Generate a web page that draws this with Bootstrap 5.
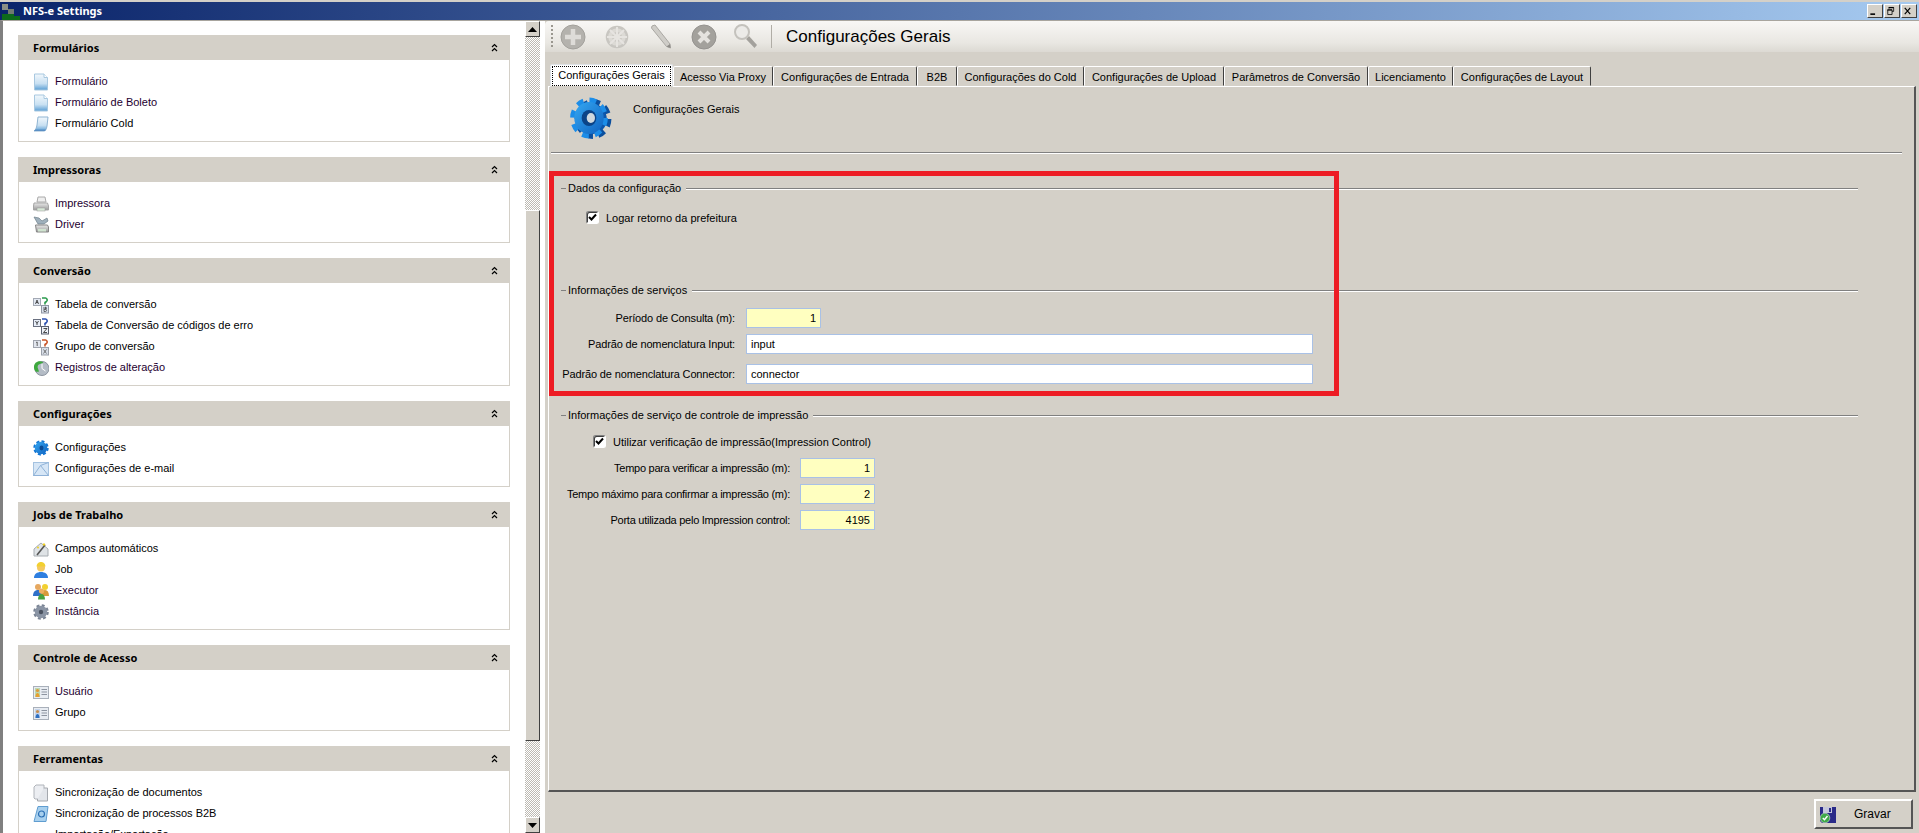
<!DOCTYPE html>
<html lang="pt">
<head>
<meta charset="utf-8">
<title>NFS-e Settings</title>
<link href="https://cdn.jsdelivr.net/npm/bootstrap@5.3.0/dist/css/bootstrap.min.css" rel="stylesheet">
<style>
html,body{height:833px;overflow:hidden}
body{background:#d4d0c8;font:11px/14px "Liberation Sans",Arial,sans-serif;color:#000;padding-top:2px}
.win-title{height:18px;background:linear-gradient(90deg,#0a246a,#a6caf0);color:#fff;font:700 11px/18px "Noto Sans",sans-serif;padding-left:2px}
.win-title svg{margin-right:3px}
.win-btns{gap:1px;margin-right:2px}
.win-btn{width:16px;height:14px;background:#d4d0c8;border:1px solid;border-color:#fff #404040 #404040 #fff;display:flex}
.win-body{height:813px;border-top:1px solid #a8a59e;border-left:3px solid #808080}
.side{width:522px;background:#fff;overflow:hidden;padding:14px 15px 0;flex:none}
.grp-panel{width:492px;margin-bottom:15px}
.grp-head{height:25px;background:#d4d0c8;font:700 11px/25px "Noto Sans",sans-serif;padding:0 12px 0 15px}
.grp-list{border:1px solid #d4d0c8;border-top:0;padding:11px 0 7px 14px}
.grp-item{height:21px;line-height:21px;gap:6px;color:#000;text-decoration:none}
.grp-item.seen{color:#240030}
.sbar{width:15px;flex:none;background:repeating-conic-gradient(#bdbab3 0 25%,#fff 0 50%) 0 0/2px 2px}
.sbtn{height:16px;background:#d4d0c8;border:1px solid;border-color:#fff #404040 #404040 #fff;display:flex;align-items:center;justify-content:center;flex:none}
.sthumb{height:531px;background:#d4d0c8;border:1px solid;border-color:#fff #404040 #404040 #fff;margin-top:173px;margin-bottom:76px;flex:none}
.split{width:5px;flex:none;background:#fff}
.main-col{flex:1;min-width:0;background:#d4d0c8}
.tbar{height:31px;background:linear-gradient(180deg,#f8f7f5 0,#e9e7e2 70%,#dcd9d3 100%);border-top-left-radius:4px;padding-left:6px;flex:none}
.tgrip{width:2px;height:24px;background:repeating-linear-gradient(180deg,#9a978f 0 2px,transparent 2px 4px);margin-right:5px;margin-top:1px}
.tslot{width:30px;height:30px;display:block;margin-right:14px}
.tslot.nudge1{margin-right:13px}
.tslot.nudge2{margin-right:13px}
.tslot.nudge3{margin-right:9px}
.tsep{width:1px;height:23px;background:#b0ada6;margin-right:14px}
.ttitle{font-size:17px;line-height:20px}
.tab-strip{margin:12px 0 0 5px;height:22px;border:0;flex:none;flex-wrap:nowrap;position:relative;z-index:1}
.tab-strip .nav-link{font-size:11px;line-height:14px;color:#000;background:#d4d0c8;border:1px solid;border-color:#fff #404040 transparent #fff;border-radius:2px 2px 0 0;padding:3px 0 2px;margin:2px 0 0;height:20px;white-space:nowrap;text-align:center}
.tab-strip .nav-link.active{height:23px;margin-top:0;padding:1px 1px 0;border-bottom-color:#d4d0c8}
.tab-strip .nav-item:nth-child(1) .nav-link{width:123px}
.tab-strip .nav-item:nth-child(2) .nav-link{width:100px}
.tab-strip .nav-item:nth-child(3) .nav-link{width:144px}
.tab-strip .nav-item:nth-child(4) .nav-link{width:40px}
.tab-strip .nav-item:nth-child(5) .nav-link{width:127px}
.tab-strip .nav-item:nth-child(6) .nav-link{width:140px}
.tab-strip .nav-item:nth-child(7) .nav-link{width:144px}
.tab-strip .nav-item:nth-child(8) .nav-link{width:85px}
.tab-strip .nav-item:nth-child(9) .nav-link{width:138px}
.tab-focus{display:block;border:1px dotted #000;padding:1px 0 3px}
.tab-page{flex:1;min-height:0;margin:0 3px 0 3px;border:1px solid;border-color:#fff #555 #555 #fff;border-width:1px 2px 2px 1px}
.page-head{height:65px;padding:15px 0 0 84px}
.gear-big{left:20px;top:8px}
.page-rule{height:2px;background:#808080;border-bottom:1px solid #fff;margin:0 12px 0 2px}
.fset{width:1297px;margin-left:12px}
.legend-row{height:14px}
.legend-row::before{content:"";width:5px;height:1px;background:#808080;margin-right:2px}
.legend-row::after{content:"";flex:1;height:2px;background:#808080;border-bottom:1px solid #fff;margin:2px 0 0 5px}
.fs1{margin-top:27px}
.fs2{margin-top:59px}
.fs3{margin-top:24px}
.chk-row{height:13px;gap:7px;margin-top:16px;margin-left:25px}
.fs3 .chk-row{margin-top:13px;margin-left:32px}
.chk-box{width:13px;height:13px;margin:0;flex:none;border-radius:0;border:1px solid;border-color:#808080 #fff #fff #808080;box-shadow:inset 1px 1px 0 #404040;background-color:#fff;opacity:1}
.chk-box:checked{background-color:#fff;border-color:#808080 #fff #fff #808080;background-image:url("data:image/svg+xml,%3Csvg xmlns='http://www.w3.org/2000/svg' viewBox='0 0 13 13'%3E%3Cpath d='M3 6l2.500 2.500L10 3.500' fill='none' stroke='%23000' stroke-width='2'/%3E%3C/svg%3E");background-size:13px 13px}
.frm-row{height:20px;margin-top:6px}
.frm-label{text-align:right;flex:none;white-space:nowrap}
.fs2 .frm-label{width:174px;margin-right:11px;letter-spacing:-.14px}
.fs3 .frm-label{width:229px;margin-right:10px;letter-spacing:-.25px}
.frm-first{margin-top:11px}
.frm-after{margin-top:10px}
.fs3 .chk-row + .frm-row{margin-top:10px}
.frm-input{height:20px;min-height:0;padding:0 4px;font-size:11px;line-height:18px;color:#000;border:1px solid #a9c1e6;border-radius:0;background:#fff;box-shadow:none}
.frm-num{width:75px;background:#ffffc0;text-align:right;flex:none}
.frm-wide{width:567px;flex:none}
.mark-box{left:0;top:84px;width:790px;height:225px;border:5px solid #ed1c24;pointer-events:none}
.foot-bar{height:41px;flex:none;padding:7px 6px 0 0}
.save-btn{width:99px;height:30px;border:2px solid;border-color:#fff #555 #555 #fff;border-radius:0;background:#d4d0c8;padding:0 0 0 4px;font-size:12px;line-height:14px;color:#000;gap:18px}
.save-btn:hover{background:#d4d0c8;color:#000;border-color:#fff #555 #555 #fff}
</style>
</head>
<body>
<svg width="0" height="0" class="position-absolute" aria-hidden="true">
<defs>
<linearGradient id="gd" x1="0" y1="0" x2="0" y2="1"><stop offset="0" stop-color="#f2f8fc"/><stop offset=".6" stop-color="#c8e0f2"/><stop offset="1" stop-color="#5a9ed4"/></linearGradient>
<linearGradient id="gg" x1="0" y1="0" x2="0" y2="1"><stop offset="0" stop-color="#e8e8e8"/><stop offset="1" stop-color="#9a9a9a"/></linearGradient>
<linearGradient id="gb" x1="0" y1="0" x2="1" y2="1"><stop offset="0" stop-color="#35a8f2"/><stop offset="1" stop-color="#0f62c0"/></linearGradient>
<symbol id="i-doc" viewBox="0 0 16 18"><path d="M1.500 1H11l3.500 3.500V17h-13z" fill="url(#gd)" stroke="#a8c8e0"/><path d="M11 1v3.500h3.500" fill="#fff" stroke="#a8c8e0"/></symbol>
<symbol id="i-cold" viewBox="0 0 16 18"><path d="M5 2h10l-1 9c-.5 3-1.500 5-3 5H1c1.500-1 2.500-3 3-6z" fill="url(#gd)" stroke="#8fb4d2"/><path d="M1 16h10c.8 0 1.500-.5 2-1.500H2.400z" fill="#5a8fc4"/></symbol>
<symbol id="i-print" viewBox="0 0 16 18"><path d="M5 2h7l1 5H4z" fill="#eee" stroke="#aaa"/><path d="M1 8h13.500l1 3v4H.5v-4z" fill="url(#gg)" stroke="#a5a5a5"/><rect x="4" y="13" width="8" height="3" fill="#d8e8d8" stroke="#999" stroke-width=".5"/></symbol>
<symbol id="i-drv" viewBox="0 0 16 18"><path d="M1 1l5 1 3 3 5-3 1 3-4 3H5z" fill="#9fb0bc" stroke="#6f7f8a" stroke-width=".7"/><path d="M2.500 9h12l1 2v5h-12z" fill="url(#gg)" stroke="#858585"/><rect x="5" y="13" width="8" height="2.500" fill="#cfe3cf"/></symbol>
<symbol id="i-ab" viewBox="0 0 16 18"><rect x=".5" y="2.500" width="7" height="7" fill="#e2e8f2" stroke="#a3a9b4"/><rect x="8.500" y="9.500" width="7" height="7.500" fill="#dbe2ee" stroke="#8f96a3"/><path d="M9 2h3.500a2 2 0 0 1 1 3.500l-1.500 1v2" fill="none" stroke="#2a9a4c" stroke-width="1.600"/><path d="M2.500 8l1.500-4 1.500 4M3 6.500h2" stroke="#333" stroke-width=".8" fill="none"/><path d="M11 11v4.500h1.500c1.500 0 1.500-2.200 0-2.200H11m1.500 0c1.200 0 1.200-2.300 0-2.300z" stroke="#333" stroke-width=".7" fill="none"/></symbol>
<symbol id="i-yz" viewBox="0 0 16 18"><rect x=".5" y="2.500" width="7" height="7" fill="#e8eef8" stroke="#6a7080"/><rect x="8.500" y="9.500" width="7" height="7.500" fill="#eef2f8" stroke="#5a6070"/><path d="M9 2h3.500a2 2 0 0 1 1 3.500l-1.500 1v2" fill="none" stroke="#2a4fb0" stroke-width="1.600"/><path d="M2.500 4l1.500 2.500L5.500 4M4 6.500V8" stroke="#222" stroke-width=".8" fill="none"/><path d="M10.500 11.500h3.500l-3.500 4h3.500" stroke="#222" stroke-width=".8" fill="none"/></symbol>
<symbol id="i-1x" viewBox="0 0 16 18"><rect x=".5" y="2.500" width="7" height="7" fill="#e2e6ee" stroke="#a0a4ae"/><rect x="8.500" y="9.500" width="7" height="7.500" fill="#d8dee8" stroke="#9aa0aa"/><path d="M9 2h3.500a2 2 0 0 1 1 3.500l-1.500 1v2" fill="none" stroke="#c8552a" stroke-width="1.600"/><path d="M3 4.500L4.200 4v4" stroke="#444" stroke-width=".8" fill="none"/><path d="M10.500 11.500l3 4m0-4l-3 4" stroke="#555" stroke-width=".8"/></symbol>
<symbol id="i-log" viewBox="0 0 16 18"><circle cx="9" cy="9.500" r="7" fill="#b4bcc6" stroke="#8c94a0"/><path d="M9 5v4.500l3.500 2.500" stroke="#fff" fill="none"/><path d="M1.500 11C-.5 5.500 3.500 1.500 8 2.500c1.500 .3 2.500 1 2.500 1L7 5C5 5.500 4 7.500 5 9.500l1 3C4 13 2.500 13 1.500 11z" fill="#3ea83e"/></symbol>
<symbol id="i-cfg" viewBox="0 0 16 18"><circle cx="8" cy="9" r="6.300" fill="none" stroke="#1476d4" stroke-width="2.800" stroke-dasharray="2.800 2.100"/><circle cx="8" cy="9" r="6.200" fill="url(#gb)"/><ellipse cx="8.500" cy="9" rx="2" ry="2.400" fill="#0a4a96"/></symbol>
<symbol id="i-mail" viewBox="0 0 16 18"><rect x=".5" y="2.500" width="15" height="13" fill="#d6e6f6" stroke="#a4c2e0"/><path d="M.5 15.500l7-10 8-3M.5 15.500l15 0M7.500 5.500l8 10" fill="none" stroke="#8fb2d8"/></symbol>
<symbol id="i-auto" viewBox="0 0 16 18"><path d="M1 9l7-6 7 6v7H1z" fill="#dfe3e6" stroke="#a7adb2"/><path d="M4 15L12 5" stroke="#555" stroke-width="1.600"/><path d="M11 3l1.500 1.500L11 6 9.500 4.500z" fill="#f0d020"/><circle cx="5" cy="7.500" r="1" fill="#f0d020"/></symbol>
<symbol id="i-user" viewBox="0 0 16 18"><path d="M1 17c0-4 3-6 7-6s7 2 7 6z" fill="#2f7fe0"/><circle cx="8" cy="6.500" r="4" fill="#f4c860"/><path d="M3.500 5.500C4 2 6 1 8 1s4 1 4.500 4.500z" fill="#f2d030"/></symbol>
<symbol id="i-users" viewBox="0 0 16 18"><circle cx="5" cy="5" r="3" fill="#e6a860"/><path d="M0 14c0-4 2-6 5-6s4 2 4 6z" fill="#2f70c8"/><circle cx="12" cy="5" r="3" fill="#f2d030"/><path d="M8 14c0-4 1.500-6 4-6s4 2 4 6z" fill="#d89a3c"/><circle cx="8.500" cy="9" r="2.600" fill="#eeb060"/><path d="M5 17.500c0-3.500 1.500-5.500 3.500-5.500s3.500 2 3.500 5.500z" fill="#48a040"/></symbol>
<symbol id="i-inst" viewBox="0 0 16 18"><circle cx="8" cy="9" r="6.500" fill="none" stroke="#7a8494" stroke-width="2.600" stroke-dasharray="2.800 2.300"/><circle cx="8" cy="9" r="6.200" fill="#8a94a4"/><circle cx="8" cy="9" r="2.200" fill="#4a5260"/></symbol>
<symbol id="i-ucard" viewBox="0 0 16 18"><rect x=".5" y="3.500" width="15" height="12" fill="#e8ecf2" stroke="#a9b0ba"/><rect x="2" y="5" width="5" height="9" fill="#bcd8b0"/><circle cx="4.500" cy="7.500" r="1.600" fill="#e09a3c"/><path d="M2.500 14c0-3 1-4 2-4s2 1 2 4z" fill="#e6a030"/><path d="M8.500 6.500h5.500M8.500 9h5.500M8.500 11.500h5.500" stroke="#8d94a0"/></symbol>
<symbol id="i-gcard" viewBox="0 0 16 18"><rect x=".5" y="3.500" width="15" height="12" fill="#e8ecf2" stroke="#a9b0ba"/><rect x="2" y="5" width="5" height="9" fill="#c4d4ec"/><circle cx="4.500" cy="7.500" r="1.600" fill="#c89050"/><path d="M2.500 14c0-3 1-4 2-4s2 1 2 4z" fill="#3070c0"/><path d="M8.500 6.500h5.500M8.500 9h5.500M8.500 11.500h5.500" stroke="#8d94a0"/></symbol>
<symbol id="i-sync" viewBox="0 0 16 18"><path d="M1 3l2-2h8v14H2l-1-1z" fill="#eceef2" stroke="#b0b4ba"/><path d="M11 4h3.500v13H4.500v-2" fill="#e2e5ea" stroke="#a4a8ae"/></symbol>
<symbol id="i-b2b" viewBox="0 0 16 18"><path d="M5 1.500h10l-2 15H1z" fill="#a8d0ee" stroke="#5f9dd0"/><circle cx="8.500" cy="9" r="3" fill="none" stroke="#2b6fb4" stroke-width="1.200"/></symbol>
<symbol id="i-imp" viewBox="0 0 16 18"><path d="M2 16a6 6 0 1 1 12 0" fill="none" stroke="#3d9a44" stroke-width="2.600"/></symbol>
<symbol id="i-chev" viewBox="0 0 7 9"><path d="M1 4l2.500-2.500L6 4M1 8l2.500-2.500L6 8" fill="none" stroke="#000" stroke-width="1.200"/></symbol>
</defs>
</svg>

<div class="win-title d-flex align-items-center">
  <svg width="18" height="18" viewBox="0 0 18 18"><rect x="0" y="2" width="6" height="6" fill="#8a8f86"/><rect x="6" y="7" width="6" height="5" fill="#707a70"/><rect x="0" y="12" width="12" height="6" fill="#0d6a1c"/><rect x="12" y="14" width="6" height="4" fill="#0d6a1c"/></svg>
  <span>NFS-e Settings</span>
  <div class="win-btns d-flex ms-auto">
    <div class="win-btn"><svg width="14" height="12" viewBox="0 0 14 12"><rect x="3" y="9" width="6" height="2"/></svg></div>
    <div class="win-btn"><svg width="14" height="12" viewBox="0 0 14 12"><path d="M5 1.500h6v5H9M5 1v2M3.500 4.500h5.500v6H3.500z" fill="none" stroke="#000"/><path d="M3 4h6v1.500H3zM5 1h6v1.500H5z"/></svg></div>
    <div class="win-btn"><svg width="14" height="12" viewBox="0 0 14 12"><path d="M3.500 2l7 8m0-8l-7 8" stroke="#000" stroke-width="1.500"/></svg></div>
  </div>
</div>

<div class="win-body d-flex">
  <aside class="side">
    <section class="grp-panel">
      <div class="grp-head d-flex justify-content-between align-items-center"><span>Formulários</span><svg width="7" height="9"><use href="#i-chev"/></svg></div>
      <div class="grp-list">
        <a class="grp-item seen d-flex align-items-center" href="#"><svg width="16" height="18"><use href="#i-doc"/></svg>Formulário</a>
        <a class="grp-item seen d-flex align-items-center" href="#"><svg width="16" height="18"><use href="#i-doc"/></svg>Formulário de Boleto</a>
        <a class="grp-item d-flex align-items-center" href="#"><svg width="16" height="18"><use href="#i-cold"/></svg>Formulário Cold</a>
      </div>
    </section>
    <section class="grp-panel">
      <div class="grp-head d-flex justify-content-between align-items-center"><span>Impressoras</span><svg width="7" height="9"><use href="#i-chev"/></svg></div>
      <div class="grp-list">
        <a class="grp-item seen d-flex align-items-center" href="#"><svg width="16" height="18"><use href="#i-print"/></svg>Impressora</a>
        <a class="grp-item seen d-flex align-items-center" href="#"><svg width="16" height="18"><use href="#i-drv"/></svg>Driver</a>
      </div>
    </section>
    <section class="grp-panel">
      <div class="grp-head d-flex justify-content-between align-items-center"><span>Conversão</span><svg width="7" height="9"><use href="#i-chev"/></svg></div>
      <div class="grp-list">
        <a class="grp-item d-flex align-items-center" href="#"><svg width="16" height="18"><use href="#i-ab"/></svg>Tabela de conversão</a>
        <a class="grp-item d-flex align-items-center" href="#"><svg width="16" height="18"><use href="#i-yz"/></svg>Tabela de Conversão de códigos de erro</a>
        <a class="grp-item d-flex align-items-center" href="#"><svg width="16" height="18"><use href="#i-1x"/></svg>Grupo de conversão</a>
        <a class="grp-item seen d-flex align-items-center" href="#"><svg width="16" height="18"><use href="#i-log"/></svg>Registros de alteração</a>
      </div>
    </section>
    <section class="grp-panel">
      <div class="grp-head d-flex justify-content-between align-items-center"><span>Configurações</span><svg width="7" height="9"><use href="#i-chev"/></svg></div>
      <div class="grp-list">
        <a class="grp-item d-flex align-items-center" href="#"><svg width="16" height="18"><use href="#i-cfg"/></svg>Configurações</a>
        <a class="grp-item d-flex align-items-center" href="#"><svg width="16" height="18"><use href="#i-mail"/></svg>Configurações de e-mail</a>
      </div>
    </section>
    <section class="grp-panel">
      <div class="grp-head d-flex justify-content-between align-items-center"><span>Jobs de Trabalho</span><svg width="7" height="9"><use href="#i-chev"/></svg></div>
      <div class="grp-list">
        <a class="grp-item d-flex align-items-center" href="#"><svg width="16" height="18"><use href="#i-auto"/></svg>Campos automáticos</a>
        <a class="grp-item d-flex align-items-center" href="#"><svg width="16" height="18"><use href="#i-user"/></svg>Job</a>
        <a class="grp-item seen d-flex align-items-center" href="#"><svg width="16" height="18"><use href="#i-users"/></svg>Executor</a>
        <a class="grp-item seen d-flex align-items-center" href="#"><svg width="16" height="18"><use href="#i-inst"/></svg>Instância</a>
      </div>
    </section>
    <section class="grp-panel">
      <div class="grp-head d-flex justify-content-between align-items-center"><span>Controle de Acesso</span><svg width="7" height="9"><use href="#i-chev"/></svg></div>
      <div class="grp-list">
        <a class="grp-item seen d-flex align-items-center" href="#"><svg width="16" height="18"><use href="#i-ucard"/></svg>Usuário</a>
        <a class="grp-item d-flex align-items-center" href="#"><svg width="16" height="18"><use href="#i-gcard"/></svg>Grupo</a>
      </div>
    </section>
    <section class="grp-panel">
      <div class="grp-head d-flex justify-content-between align-items-center"><span>Ferramentas</span><svg width="7" height="9"><use href="#i-chev"/></svg></div>
      <div class="grp-list">
        <a class="grp-item d-flex align-items-center" href="#"><svg width="16" height="18"><use href="#i-sync"/></svg>Sincronização de documentos</a>
        <a class="grp-item d-flex align-items-center" href="#"><svg width="16" height="18"><use href="#i-b2b"/></svg>Sincronização de processos B2B</a>
        <a class="grp-item d-flex align-items-center" href="#"><svg width="16" height="18"><use href="#i-imp"/></svg>Importação/Exportação</a>
      </div>
    </section>
  </aside>

  <div class="sbar d-flex flex-column">
    <div class="sbtn"><svg width="9" height="5" viewBox="0 0 9 5"><path d="M4.500 0L9 5H0z"/></svg></div>
    <div class="sthumb"></div>
    <div class="sbtn"><svg width="9" height="5" viewBox="0 0 9 5"><path d="M0 0h9L4.500 5z"/></svg></div>
  </div>
  <div class="split"></div>

  <main class="main-col d-flex flex-column">
    <div class="tbar d-flex align-items-center">
      <div class="tgrip"></div>
      <svg class="tslot" viewBox="0 0 30 30"><circle cx="15" cy="15" r="12" fill="#b4b2ad" stroke="#a3a19c"/><path d="M15 7v16M7 15h16" stroke="#dedcd8" stroke-width="4.500"/></svg>
      <svg class="tslot" viewBox="0 0 30 30"><circle cx="15" cy="15" r="10" fill="#dcdad5" stroke="#c8c6c1" stroke-width="2.500"/><circle cx="15" cy="15" r="5" fill="#ccc9c4"/><path d="M15 5v20M5 15h20M8 8l14 14M22 8L8 22" stroke="#e6e4e0" stroke-width="2"/></svg>
      <svg class="tslot nudge1" viewBox="0 0 30 30"><path d="M6 4l3-1 15 19 .5 4-4-1.500L5.500 6z" fill="#cfcdc8" stroke="#aaa8a3"/><path d="M20.500 24.500l4 1.500-.5-4z" fill="#8e8c88"/></svg>
      <svg class="tslot nudge2" viewBox="0 0 30 30"><circle cx="15" cy="15" r="12" fill="#a3a19c" stroke="#959390"/><path d="M10 10l10 10m0-10L10 20" stroke="#e4e2de" stroke-width="4"/></svg>
      <svg class="tslot nudge3" viewBox="0 0 30 30"><path d="M14 17l3-3 8 9-2.500 3z" fill="#a3a19c"/><circle cx="10" cy="10" r="7" fill="#ecebe8" stroke="#c4c2bd" stroke-width="2"/></svg>
      <div class="tsep"></div>
      <div class="ttitle">Configurações Gerais</div>
    </div>

    <ul class="nav nav-tabs tab-strip">
      <li class="nav-item"><a class="nav-link active" href="#"><span class="tab-focus">Configurações Gerais</span></a></li>
      <li class="nav-item"><a class="nav-link" href="#">Acesso Via Proxy</a></li>
      <li class="nav-item"><a class="nav-link" href="#">Configurações de Entrada</a></li>
      <li class="nav-item"><a class="nav-link" href="#">B2B</a></li>
      <li class="nav-item"><a class="nav-link" href="#">Configurações do Cold</a></li>
      <li class="nav-item"><a class="nav-link" href="#">Configurações de Upload</a></li>
      <li class="nav-item"><a class="nav-link" href="#">Parâmetros de Conversão</a></li>
      <li class="nav-item"><a class="nav-link" href="#">Licenciamento</a></li>
      <li class="nav-item"><a class="nav-link" href="#">Configurações de Layout</a></li>
    </ul>

    <div class="tab-page position-relative">
      <div class="page-head position-relative">
        <svg class="gear-big position-absolute" width="44" height="46" viewBox="0 0 44 46">
          <g transform="translate(24 24) scale(.92 1)"><circle r="16" fill="none" stroke="#0b4f9e" stroke-width="8" stroke-dasharray="7 5.500"/><circle r="15" fill="#0d56aa"/></g>
          <g transform="translate(20 23) scale(.92 1)"><circle r="17" fill="none" stroke="#1c8de8" stroke-width="7" stroke-dasharray="7 6.350"/><circle r="16" fill="url(#gb)"/><circle r="8" fill="#0b4488"/><ellipse cx="2" cy="0" rx="4.500" ry="5" fill="#cfd8de"/></g>
        </svg>
        Configurações Gerais
      </div>
      <div class="page-rule"></div>

      <fieldset class="fset fs1">
        <div class="legend-row d-flex align-items-center"><span>Dados da configuração</span></div>
        <div class="chk-row d-flex align-items-center">
          <input class="form-check-input chk-box" type="checkbox" checked id="c1">
          <label for="c1">Logar retorno da prefeitura</label>
        </div>
      </fieldset>

      <fieldset class="fset fs2">
        <div class="legend-row d-flex align-items-center"><span>Informações de serviços</span></div>
        <div class="frm-row frm-first d-flex align-items-center">
          <label class="frm-label" for="f1">Período de Consulta (m):</label>
          <input class="form-control frm-input frm-num" id="f1" value="1">
        </div>
        <div class="frm-row d-flex align-items-center">
          <label class="frm-label" for="f2">Padrão de nomenclatura Input:</label>
          <input class="form-control frm-input frm-wide" id="f2" value="input">
        </div>
        <div class="frm-row frm-after d-flex align-items-center">
          <label class="frm-label" for="f3">Padrão de nomenclatura Connector:</label>
          <input class="form-control frm-input frm-wide" id="f3" value="connector">
        </div>
      </fieldset>

      <fieldset class="fset fs3">
        <div class="legend-row d-flex align-items-center"><span>Informações de serviço de controle de impressão</span></div>
        <div class="chk-row d-flex align-items-center">
          <input class="form-check-input chk-box" type="checkbox" checked id="c2">
          <label for="c2">Utilizar verificação de impressão(Impression Control)</label>
        </div>
        <div class="frm-row d-flex align-items-center">
          <label class="frm-label" for="f4">Tempo para verificar a impressão (m):</label>
          <input class="form-control frm-input frm-num" id="f4" value="1">
        </div>
        <div class="frm-row d-flex align-items-center">
          <label class="frm-label" for="f5">Tempo máximo para confirmar a impressão (m):</label>
          <input class="form-control frm-input frm-num" id="f5" value="2">
        </div>
        <div class="frm-row d-flex align-items-center">
          <label class="frm-label" for="f6">Porta utilizada pelo Impression control:</label>
          <input class="form-control frm-input frm-num" id="f6" value="4195">
        </div>
      </fieldset>

      <div class="mark-box position-absolute"></div>
    </div>

    <div class="foot-bar d-flex justify-content-end">
      <button type="button" class="btn save-btn d-flex align-items-center">
        <svg width="16" height="17" viewBox="0 0 16 17"><path d="M0 1h16v16H2l-2-2z" fill="#2a2a88"/><rect x="3" y="1" width="9" height="6" fill="#c4c6dc"/><rect x="9" y="2" width="2" height="4" fill="#2a2a88"/><circle cx="5" cy="12" r="4.800" fill="#3faa4a" stroke="#d8e8d8" stroke-width=".6"/><path d="M2.800 12l1.700 1.800L7.500 10" fill="none" stroke="#fff" stroke-width="1.400"/></svg>
        <span>Gravar</span>
      </button>
    </div>
  </main>
</div>
<script src="https://cdn.jsdelivr.net/npm/bootstrap@5.3.0/dist/js/bootstrap.bundle.min.js"></script>
</body>
</html>
